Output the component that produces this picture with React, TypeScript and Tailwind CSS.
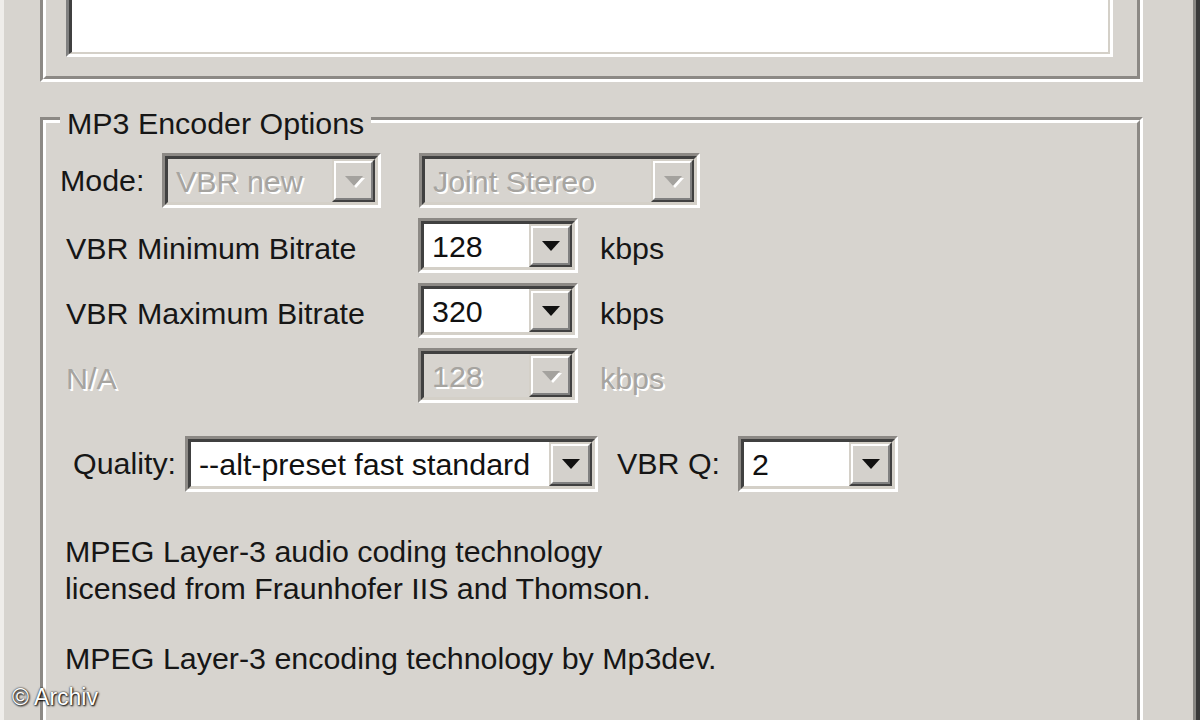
import React from 'react';

const BG = 'bg-[#d7d4cf]';

function Arrow({ disabled }: { disabled?: boolean }) {
	return (
		<svg width="18" height="10" viewBox="0 0 18 10" className="overflow-visible">
			{disabled && <polygon points="2,2 20,2 11,12" fill="#ffffff" />}
			<polygon points="0,0 18,0 9,10" fill={disabled ? '#a4a29e' : '#111111'} />
		</svg>
	);
}

function Combo({ value, className, disabled }: { value: string; className: string; disabled?: boolean }) {
	return (
		<div className={`flex h-[55px] border-[3px] border-t-[#8c8985] border-l-[#8c8985] border-b-white border-r-white ${className}`}>
			<div className="flex flex-1 border-[3px] border-t-[#404040] border-l-[#404040] border-b-[#d4d0c8] border-r-[#d4d0c8]">
				<div
					className={`flex flex-1 items-center pl-[8px] pt-[2px] ${
						disabled ? 'text-[#a6a4a0] [text-shadow:2px_2px_0_#ffffff]' : 'bg-white text-[#111]'
					}`}
				>
					{value}
				</div>
				<div className="flex w-[43px] border-[2px] border-t-[#d4d0c8] border-l-[#d4d0c8] border-b-[#404040] border-r-[#404040]">
					<div className="flex flex-1 items-center justify-center border-[2px] border-t-white border-l-white border-b-[#808080] border-r-[#808080] bg-[#d4d1cc]">
						<Arrow disabled={disabled} />
					</div>
				</div>
			</div>
		</div>
	);
}

export default function App() {
	return (
		<div className={`relative flex h-[720px] w-[1200px] overflow-hidden ${BG} font-['Liberation_Sans',Arial,sans-serif] text-[30.4px] text-[#161616]`}>
			<div className="w-[4px] bg-[#efedea]" />

			<div className="flex-1 pl-[36px] pr-[50px]">
				{/* upper group, only its bottom part visible */}
				<div className="border-[3px] border-t-0 border-l-[#8c8985] border-b-white border-r-white">
					<div className="border-[3px] border-t-0 border-l-white border-b-[#8c8985] border-r-[#8c8985] pb-[19px] pl-[20px] pr-[24px]">
						<div className="h-[57px] border-b-[3px] border-l-[3px] border-r-[3px] border-b-white border-l-[#808080] border-r-white">
							<div className="h-full border-b-[2px] border-l-[3px] border-r-[2px] border-b-[#d4d0c8] border-l-[#404040] border-r-[#d4d0c8] bg-white" />
						</div>
					</div>
				</div>

				{/* MP3 Encoder Options */}
				<div className="relative mt-[35px] h-[700px] border-[3px] border-t-[#8c8985] border-l-[#8c8985] border-b-white border-r-white">
					<div className="h-full border-[3px] border-t-white border-l-white border-b-[#8c8985] border-r-[#8c8985] pl-[14px] pt-[30px]">
						<div className="flex h-[55px] items-center">
							<span className="w-[102px]">Mode:</span>
							<Combo className="w-[219px]" value="VBR new" disabled />
							<Combo className="ml-[38px] w-[281px]" value="Joint Stereo" disabled />
						</div>

						<div className="mt-[10px] flex h-[55px] items-center pl-[6px]">
							<span className="w-[352px] pt-[6px]">VBR Minimum Bitrate</span>
							<Combo className="w-[160px]" value="128" />
							<span className="ml-[22px] pt-[6px]">kbps</span>
						</div>

						<div className="mt-[10px] flex h-[55px] items-center pl-[6px]">
							<span className="w-[352px] pt-[6px]">VBR Maximum Bitrate</span>
							<Combo className="w-[160px]" value="320" />
							<span className="ml-[22px] pt-[6px]">kbps</span>
						</div>

						<div className="mt-[10px] flex h-[55px] items-center pl-[6px] text-[#a6a4a0] [text-shadow:2px_2px_0_#ffffff]">
							<span className="w-[352px] pt-[6px]">N/A</span>
							<Combo className="w-[160px]" value="128" disabled />
							<span className="ml-[22px] pt-[6px]">kbps</span>
						</div>

						<div className="mt-[33px] flex h-[56px] items-center pl-[13px]">
							<span className="w-[112px]">Quality:</span>
							<Combo className="h-[56px] w-[413px]" value="--alt-preset fast standard" />
							<span className="ml-[19px] w-[121px]">VBR Q:</span>
							<Combo className="h-[56px] w-[160px]" value="2" />
						</div>

						<div className="mt-[41px] pl-[5px] leading-[37px]">
							<p>MPEG Layer-3 audio coding technology</p>
							<p>licensed from Fraunhofer IIS and Thomson.</p>
							<p className="mt-[33px]">MPEG Layer-3 encoding technology by Mp3dev.</p>
						</div>
					</div>

					<div className={`absolute left-[17px] top-[-15px] px-[7px] leading-[36px] ${BG}`}>MP3 Encoder Options</div>
				</div>
			</div>

			<div className="w-[7px] border-l-[3px] border-l-[#8a8884] bg-[#3a3a3a]" />

			<div className="absolute left-[12px] top-[683px] text-[23px] leading-[28px] text-white [text-shadow:1px_1px_2px_#000,0_0_2px_#000]">
				© Archiv
			</div>
		</div>
	);
}
